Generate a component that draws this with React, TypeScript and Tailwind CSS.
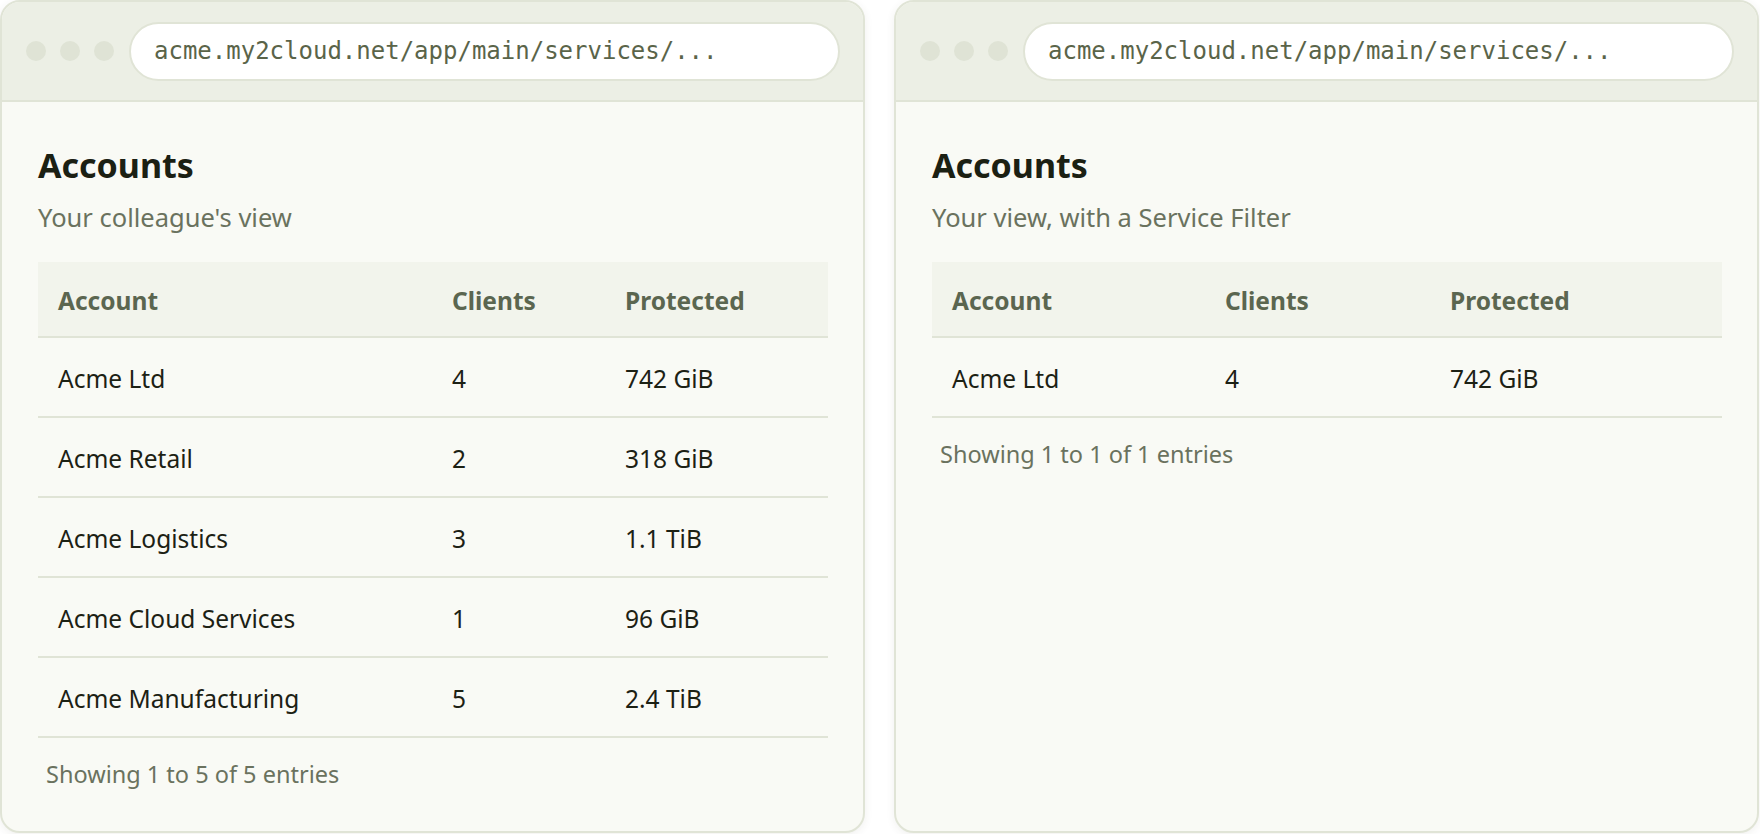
import React from "react";

type Row = { name: string; clients: string; protectedAmt: string };

const allRows: Row[] = [
  { name: "Acme Ltd", clients: "4", protectedAmt: "742 GiB" },
  { name: "Acme Retail", clients: "2", protectedAmt: "318 GiB" },
  { name: "Acme Logistics", clients: "3", protectedAmt: "1.1 TiB" },
  { name: "Acme Cloud Services", clients: "1", protectedAmt: "96 GiB" },
  { name: "Acme Manufacturing", clients: "5", protectedAmt: "2.4 TiB" },
];

function BrowserCard({
  subtitle,
  rows,
  widths,
  footer,
}: {
  subtitle: string;
  rows: Row[];
  widths: [string, string, string];
  footer: string;
}) {
  return (
    <div className="w-[865px] h-[833px] shrink-0 rounded-[20px] border-2 border-[#e0e4d6] bg-[#f9faf5] overflow-hidden shadow-[0_2px_8px_rgba(60,70,40,0.08)] flex flex-col">
      <div className="h-[100px] shrink-0 bg-[#ecefe5] border-b-2 border-[#e0e4d6] flex items-center pl-[24px] pr-[23px]">
        <div className="flex gap-[14px]">
          <div className="w-[20px] h-[20px] rounded-full bg-[#dfe3d5]" />
          <div className="w-[20px] h-[20px] rounded-full bg-[#dfe3d5]" />
          <div className="w-[20px] h-[20px] rounded-full bg-[#dfe3d5]" />
        </div>
        <div className="ml-[15px] flex-1 h-[59px] rounded-full bg-white border-2 border-[#e0e4d6] flex items-center pl-[23px]">
          <span className="font-['DejaVu_Sans_Mono',monospace] text-[24px] text-[#5a6449] leading-none">
            acme.my2cloud.net/app/main/services/...
          </span>
        </div>
      </div>
      <div className="px-[36px] pt-[43px] font-['Noto_Sans',sans-serif]">
        <h1 className="text-[34px] leading-[40px] font-bold text-[#1b2013]">Accounts</h1>
        <p className="mt-[16px] text-[25.5px] leading-[32px] text-[#6a725e]">{subtitle}</p>
        <table className="mt-[29px] w-full border-collapse table-fixed">
          <colgroup>
            <col style={{ width: widths[0] }} />
            <col style={{ width: widths[1] }} />
            <col style={{ width: widths[2] }} />
          </colgroup>
          <thead>
            <tr className="bg-[#f2f4ec] border-b-2 border-[#e0e4d6]">
              <th className="h-[75px] pl-[20px] pt-[4px] text-left text-[24.5px] font-bold text-[#5b6650]">Account</th>
              <th className="h-[75px] pl-[20px] pt-[4px] text-left text-[24.5px] font-bold text-[#5b6650]">Clients</th>
              <th className="h-[75px] pl-[20px] pt-[4px] text-left text-[24.5px] font-bold text-[#5b6650]">Protected</th>
            </tr>
          </thead>
          <tbody>
            {rows.map((r) => (
              <tr key={r.name} className="border-b-2 border-[#e0e4d6]">
                <td className="h-[80px] pl-[20px] pt-[4px] text-[24.5px] text-[#1c2114]">{r.name}</td>
                <td className="h-[80px] pl-[20px] pt-[4px] text-[24.5px] text-[#1c2114]">{r.clients}</td>
                <td className="h-[80px] pl-[20px] pt-[4px] text-[24.5px] text-[#1c2114]">{r.protectedAmt}</td>
              </tr>
            ))}
          </tbody>
        </table>
        <div className="mt-[21px] pl-[8px] text-[23.5px] leading-[30px] text-[#6a725e]">{footer}</div>
      </div>
    </div>
  );
}

export default function App() {
  return (
    <div className="w-[1760px] h-[834px] bg-white flex gap-[29px]">
      <BrowserCard
        subtitle="Your colleague's view"
        rows={allRows}
        widths={["394px", "173px", "223px"]}
        footer="Showing 1 to 5 of 5 entries"
      />
      <BrowserCard
        subtitle="Your view, with a Service Filter"
        rows={allRows.slice(0, 1)}
        widths={["273px", "225px", "292px"]}
        footer="Showing 1 to 1 of 1 entries"
      />
    </div>
  );
}
